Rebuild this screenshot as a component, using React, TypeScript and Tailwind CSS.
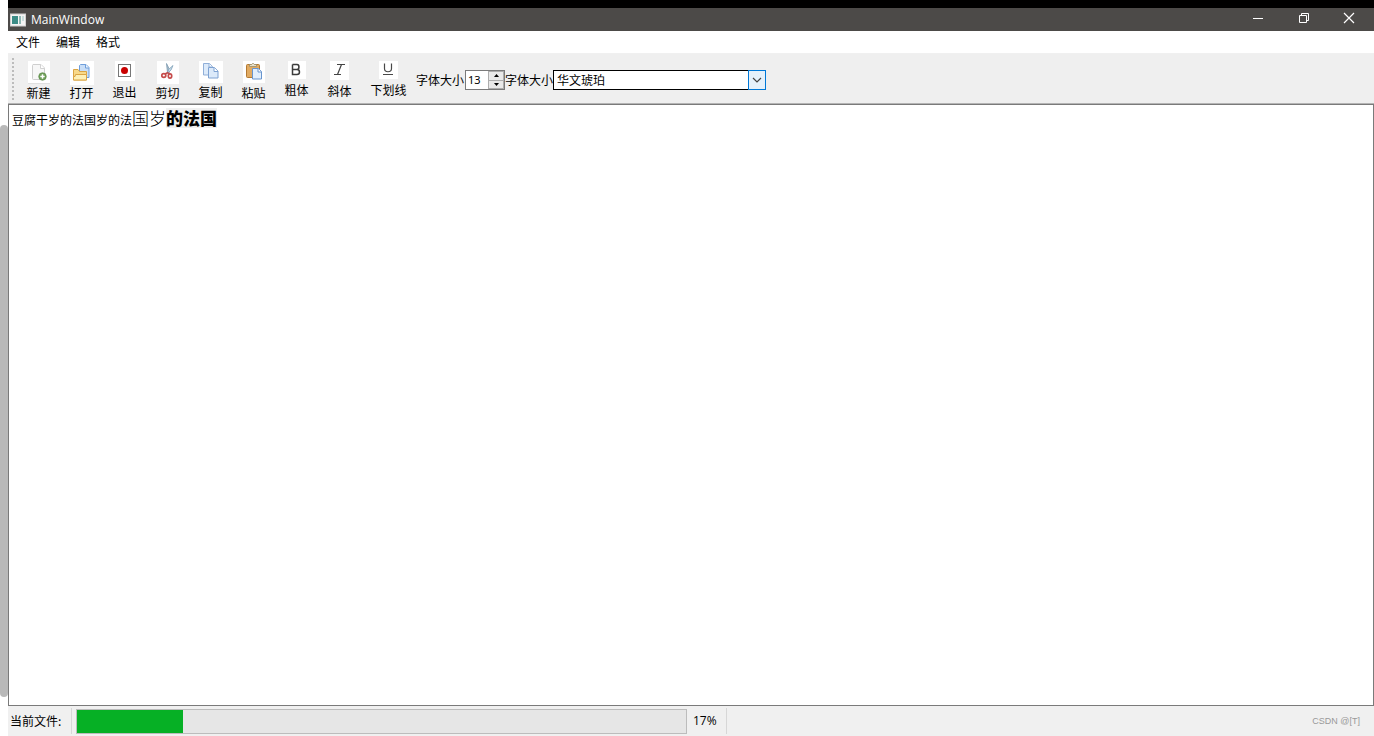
import type { ReactNode } from 'react';

function NewIcon() {
  return (
    <svg width="22" height="23" viewBox="0 0 22 23" className="bg-white" aria-hidden="true">
      <path d="M5 3.5h8l3.500 3.500v10.500q0 1-1 1h-10q-1 0-1-1v-13q0-1 1-1z" fill="#f7f7f7" stroke="#cfcfcf" />
      <path d="M12.500 3.500v4h4" fill="#fff" stroke="#d2d2d2" />
      <circle cx="14.500" cy="15.500" r="3.800" fill="#6f9f58" stroke="#568544" strokeWidth=".6" />
      <path d="M14.500 13.300v4.400M12.300 15.500h4.400" stroke="#fff" strokeWidth="1.500" />
      <path d="M0 22.500h22" stroke="#e0e0e0" />
    </svg>
  );
}

function OpenIcon() {
  return (
    <svg width="24" height="24" viewBox="0 0 24 24" className="bg-white" aria-hidden="true">
      <path d="M9.500 4.500l1-1h5.500l3 3v10h-9.500z" fill="#c9def7" stroke="#6f9edb" />
      <path d="M15.500 3.500v3.500h3.500" fill="#eef5fd" stroke="#6f9edb" />
      <path d="M3.500 8.500h4.500l1.500 2h7v8.500h-13z" fill="#f8d98a" stroke="#dba544" />
      <path d="M5.500 13.500h11v5.500h-13v-3.500h1.500z" fill="#fdf0b8" stroke="#dba544" />
    </svg>
  );
}

function ExitIcon() {
  return (
    <svg width="20" height="20" viewBox="0 0 20 20" className="bg-white" aria-hidden="true">
      <rect x="3.500" y="3.500" width="12" height="12" fill="#fff" stroke="#777" />
      <circle cx="9.500" cy="9.500" r="3.500" fill="#c90000" />
    </svg>
  );
}

function CutIcon() {
  return (
    <svg width="22" height="23" viewBox="0 0 22 23" className="bg-white" aria-hidden="true">
      <path d="M9.500 2.500l2.500 5v5l-1.500-1z" fill="#a7bccb" stroke="#7d9bb0" strokeWidth=".8" />
      <path d="M16 4.500l-2 4.500-3.500 3.500 1-4z" fill="#c8dcea" stroke="#7d9fb8" strokeWidth=".8" />
      <path d="M11 11.500l-3 1.500M11.500 11.500l1 2" stroke="#c04848" strokeWidth="1.600" />
      <ellipse cx="6.800" cy="14.500" rx="2" ry="1.900" fill="none" stroke="#c64c4c" strokeWidth="1.700" />
      <ellipse cx="13" cy="15" rx="1.700" ry="2.200" fill="none" stroke="#c64c4c" strokeWidth="1.700" />
    </svg>
  );
}

function CopyIcon() {
  return (
    <svg width="24" height="22" viewBox="0 0 24 22" className="bg-white" aria-hidden="true">
      <path d="M4.500 2.500h6l3 3v8.500h-9z" fill="#dceafa" stroke="#90afd8" />
      <path d="M10 2.500v3.500h3.500" fill="#fff" stroke="#90afd8" />
      <path d="M9.500 6.500h6l3.500 3.500v7h-9.500z" fill="#dceafa" stroke="#7ea2d2" />
      <path d="M15 6.500v4h4" fill="#fff" stroke="#7ea2d2" />
    </svg>
  );
}

function PasteIcon() {
  return (
    <svg width="22" height="22" viewBox="0 0 22 22" className="bg-white" aria-hidden="true">
      <rect x="3.500" y="3.500" width="13" height="13" rx="1" fill="#e2ab62" stroke="#b37932" />
      <path d="M6.500 5.500v-2h2l1-1h1l1 1h2v2z" fill="#e6e0ca" stroke="#9a8b66" strokeWidth=".8" />
      <path d="M9.500 7.500h6l3 3v7.500h-9z" fill="#e2effd" stroke="#6895ce" />
      <path d="M15 7.500v3.500h3.500" fill="#fff" stroke="#6895ce" />
    </svg>
  );
}

function BoldIcon() {
  return (
    <svg width="18" height="18" viewBox="0 0 18 18" className="bg-white" aria-hidden="true">
      <path d="M4.500 3.500v10h4.500c3.300 0 3.300-5 0-5h-4.500M9 8.500c2.600 0 2.600-5 0-5h-4.500" fill="none" stroke="#3c3c3c" strokeWidth="1.500" />
    </svg>
  );
}

function ItalicIcon() {
  return (
    <svg width="19" height="19" viewBox="0 0 19 19" className="bg-white" aria-hidden="true">
      <path d="M7 3.500h8M4 13.500h7M11.500 3.500l-4 10" fill="none" stroke="#444" strokeWidth="1.200" />
    </svg>
  );
}

function UnderlineIcon() {
  return (
    <svg width="19" height="18" viewBox="0 0 19 18" className="bg-white" aria-hidden="true">
      <path d="M5.500 2.500v5c0 4.300 7 4.300 7 0v-5M4 13.500h10" fill="none" stroke="#484848" strokeWidth="1.200" />
    </svg>
  );
}

type Tool = { label: string; icon: ReactNode; width: string; iconHeight: string };

const tools: Tool[] = [
  { label: '新建', icon: <NewIcon />, width: 'w-[43px]', iconHeight: 'h-[23px]' },
  { label: '打开', icon: <OpenIcon />, width: 'w-[43px]', iconHeight: 'h-[23px]' },
  { label: '退出', icon: <ExitIcon />, width: 'w-[43px]', iconHeight: 'h-[22px]' },
  { label: '剪切', icon: <CutIcon />, width: 'w-[43px]', iconHeight: 'h-[23px]' },
  { label: '复制', icon: <CopyIcon />, width: 'w-[43px]', iconHeight: 'h-[22px]' },
  { label: '粘贴', icon: <PasteIcon />, width: 'w-[43px]', iconHeight: 'h-[23px]' },
  { label: '粗体', icon: <BoldIcon />, width: 'w-[43px]', iconHeight: 'h-[20px]' },
  { label: '斜体', icon: <ItalicIcon />, width: 'w-[43px]', iconHeight: 'h-[21px]' },
  { label: '下划线', icon: <UnderlineIcon />, width: 'w-[55px]', iconHeight: 'h-[20px]' },
];

function TitleBar() {
  return (
    <header className="flex h-[31px] shrink-0 items-center border-t-8 border-black bg-[#4c4a48] text-white">
      <svg width="16" height="14" viewBox="0 0 16 14" className="ml-0.5" aria-hidden="true">
        <rect x=".5" y="1" width="15" height="12" fill="#f4f4f4" stroke="#d0d0d0" />
        <rect x="2" y="3" width="6" height="8" fill="#3b8c86" />
        <rect x="9" y="3" width="2" height="8" fill="#8fb8b4" />
        <rect x="12" y="3" width="2" height="5" fill="#c8dedc" />
      </svg>
      <h1 className="ml-[5px] flex-1 font-['Open_Sans',sans-serif] text-[12px]">MainWindow</h1>
      <div className="flex pr-0.5">
        <button type="button" aria-label="最小化" className="flex h-[23px] w-[46px] items-center justify-center">
          <svg width="12" height="12" viewBox="0 0 12 12" className="mb-1">
            <path d="M1 6.500h10" stroke="#fff" />
          </svg>
        </button>
        <button type="button" aria-label="还原" className="flex h-[23px] w-[45px] items-center justify-center">
          <svg width="12" height="12" viewBox="0 0 12 12" className="mb-1">
            <path d="M1.500 3.500h7v7h-7zM3.500 3.500v-2h7v7h-2" fill="none" stroke="#fff" />
          </svg>
        </button>
        <button type="button" aria-label="关闭" className="flex h-[23px] w-[46px] items-center justify-center">
          <svg width="12" height="12" viewBox="0 0 12 12" className="mb-1">
            <path d="M1 1l10 10M11 1L1 11" stroke="#fff" strokeWidth="1.200" />
          </svg>
        </button>
      </div>
    </header>
  );
}

function ToolBar() {
  return (
    <div role="toolbar" className="flex h-[50px] shrink-0 border-b border-[#b4b4b4] bg-[#efefef]">
      <svg width="9" height="46" viewBox="0 0 9 46" className="mt-1 shrink-0" aria-hidden="true">
        <path d="M5 0v44" stroke="#bcbcbc" strokeWidth="2" strokeDasharray="2 2" />
      </svg>
      {tools.map((tool) => (
        <button key={tool.label} type="button" className={`flex shrink-0 flex-col items-center pt-[7px] ${tool.width}`}>
          <span className={`flex shrink-0 justify-center ${tool.iconHeight}`}>{tool.icon}</span>
          <span className="leading-[18px] whitespace-nowrap">{tool.label}</span>
        </button>
      ))}
      <div className="flex items-center pt-[3px]">
        <label htmlFor="size" className="w-[49px] whitespace-nowrap">字体大小</label>
        <div className="flex h-5 w-10 border border-[#7a7a7a] bg-white">
          <input
            id="size"
            type="text"
            inputMode="numeric"
            defaultValue="13"
            className="min-w-0 flex-1 pl-0.5 font-['Noto_Sans',sans-serif] text-[11px] outline-none"
          />
          <div className="flex w-4 shrink-0 flex-col bg-[#e9e9e9]">
            <button type="button" aria-label="增大" className="flex flex-1 items-center justify-center border border-[#adadad]">
              <svg width="5" height="3" viewBox="0 0 5 3"><path d="M0 3L2.500 0 5 3z" /></svg>
            </button>
            <button type="button" aria-label="减小" className="flex flex-1 items-center justify-center border border-t-0 border-[#adadad]">
              <svg width="5" height="3" viewBox="0 0 5 3"><path d="M0 0l2.500 3L5 0z" /></svg>
            </button>
          </div>
        </div>
        <label htmlFor="family" className="w-12 whitespace-nowrap">字体大小</label>
        <div className="grid h-5 w-[213px]">
          <select
            id="family"
            className="col-start-1 row-start-1 appearance-none border border-black bg-white pl-[3px] outline-none"
          >
            <option>华文琥珀</option>
          </select>
          <span className="pointer-events-none col-start-1 row-start-1 flex w-[18px] items-center justify-center justify-self-end border border-[#0078d7] bg-[#e5f1fb]">
            <svg width="10" height="6" viewBox="0 0 10 6">
              <path d="M1 1l4 4 4-4" fill="none" stroke="#444" strokeWidth="1.200" />
            </svg>
          </span>
        </div>
      </div>
    </div>
  );
}

function StatusBar() {
  return (
    <footer className="flex h-[30px] shrink-0 items-center bg-[#f0f0f0]">
      <span className="w-[63px] pl-0.5 whitespace-nowrap">当前文件:</span>
      <span className="h-[26px] w-px bg-[#d7d7d7]" />
      <div
        role="progressbar"
        aria-label="当前文件"
        aria-valuenow={17}
        aria-valuemin={0}
        aria-valuemax={100}
        className="ml-1 h-[25px] w-[611px] border border-[#bcbcbc] bg-[#e6e6e6]"
      >
        <div className="h-full bg-[#06b025]" style={{ width: '17.4%' }} />
      </div>
      <span className="w-[39px] pl-1.5 font-['Open_Sans',sans-serif]">17%</span>
      <span className="h-[26px] w-px bg-[#d7d7d7]" />
      <span className="ml-auto pr-3.5 font-['Liberation_Sans',sans-serif] text-[9px] text-[#999]">CSDN @[T]</span>
    </footer>
  );
}

export default function App() {
  return (
    <div className="flex h-screen bg-white font-['Noto_Sans_CJK_SC',sans-serif] text-[12px] leading-4 text-black">
      <div className="flex w-2 shrink-0 flex-col pt-[125px] pb-[39px]">
        <div className="flex-1 rounded-full bg-[#b9b9b9]" />
      </div>
      <div className="flex min-w-0 flex-1 flex-col">
        <TitleBar />
        <nav className="flex h-[23px] shrink-0 items-center gap-4 border-b border-[#f0f0f0] pl-2">
          <button type="button">文件</button>
          <button type="button">编辑</button>
          <button type="button">格式</button>
        </nav>
        <ToolBar />
        <main
          role="textbox"
          aria-label="文档"
          aria-multiline="true"
          contentEditable
          suppressContentEditableWarning
          className="min-h-0 flex-1 overflow-auto border border-[#7a7a7a] px-[3px] py-px leading-6 outline-none"
        >
          豆腐干岁的法国岁的法<span className="text-[17px] font-light">国岁</span>
          <span className="inline-block bg-[#f0f0f0] text-[17px] leading-5 font-black">的法国</span>
        </main>
        <StatusBar />
      </div>
    </div>
  );
}
